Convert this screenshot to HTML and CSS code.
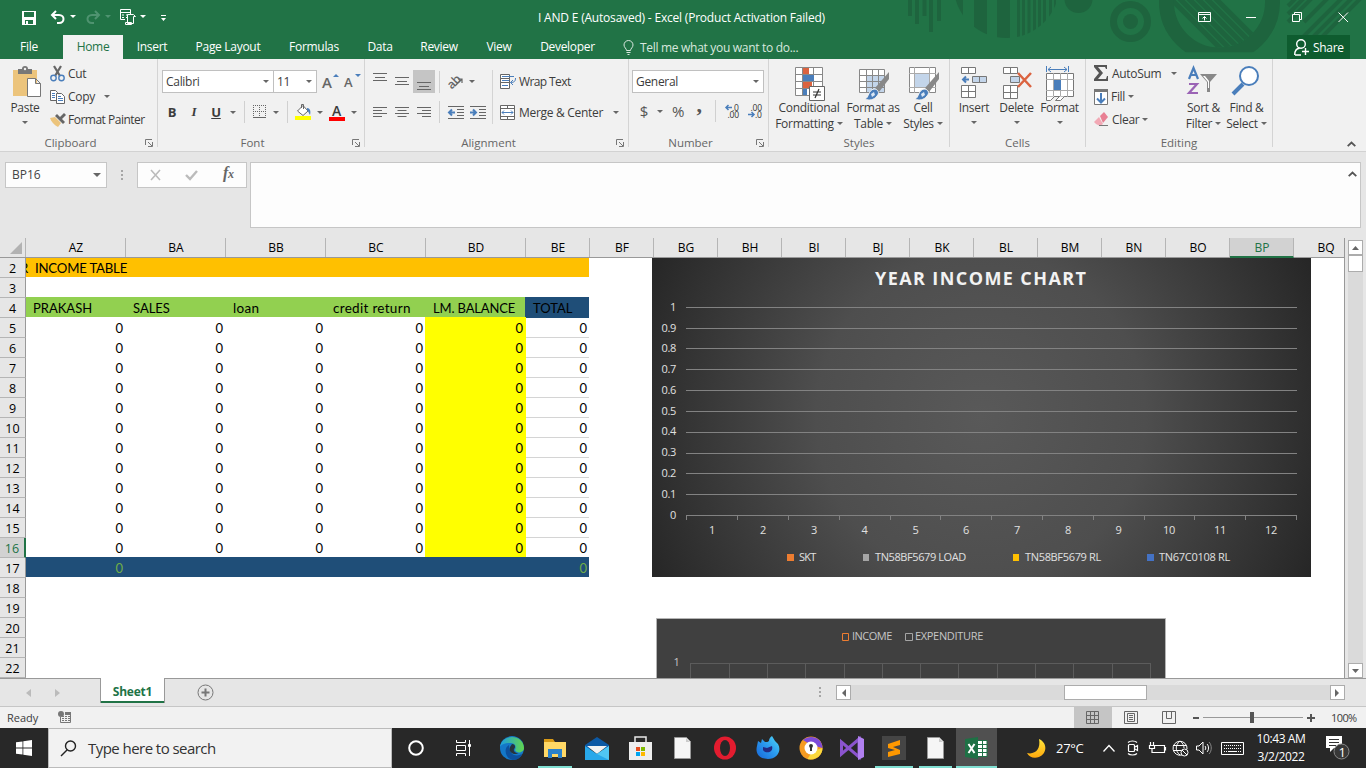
FILE: index.html
```html
<!DOCTYPE html>
<html lang="en">
<head>
<meta charset="utf-8">
<title>I AND E (Autosaved) - Excel</title>
<link rel="stylesheet" href="styles.css">
</head>
<body>
<header class="top">
  <svg class="decor" width="480" height="59" viewBox="0 0 480 59">
    <defs>
      <clipPath id="disc"><circle cx="120.500" cy="-14.800" r="52.800"/></clipPath>
      <clipPath id="lens"><circle cx="333.500" cy="2" r="45.600"/></clipPath>
      <clipPath id="cut"><rect width="480" height="52.300"/></clipPath>
    </defs>
    <g fill="#1e643e">
      <path d="M22 0h4v16h-4zM29 0h4v24h-4zM36.500 0h4v16h-4zM43 0h4v32h-4zM51 0h4v21h-4z"/>
      <path clip-path="url(#disc)" d="M60 0h17v40h-17zM88 0h13v40h-13zM111 0h13v40h-13zM131 0h3v40h-3zM136 0h3v40h-3zM141.500 0h3v40h-3zM147 0h3v40h-3zM152 0h3v40h-3zM157 0h3v40h-3zM163 0h3v40h-3zM168 0h2v40h-2z"/>
      <circle cx="192.500" cy="-1" r="14"/>
      <circle cx="244.500" cy="21.500" r="7.500"/>
    </g>
    <circle cx="244.500" cy="21.500" r="17" fill="none" stroke="#1e643e" stroke-width="7"/>
    <g clip-path="url(#cut)" fill="none" stroke="#1e643e">
      <circle cx="333.500" cy="2" r="53" stroke-width="15"/>
      <path clip-path="url(#lens)" stroke-width="5" d="M280-6l62 62M289-6l62 62M298-6l62 62M307-6l62 62M316-6l62 62M325-6l62 62"/>
      <path stroke-width="4" d="M402 6l9-9M402 14l19-19M402 22l28-28M418 22l26-26M402 52l57-57M412 52l57-57M421 52l54-54"/>
    </g>
  </svg>
  <div class="titlebar">
    <div class="quick">
      <svg width="14" height="14"><path fill="#fff" fill-rule="evenodd" d="M0 0h14v14H0zM2 1v5h10V1zM3 9v4h1v-3h2v3h5V9z"/></svg>
      <svg width="15" height="14" fill="none" stroke="#fff" stroke-width="2"><path d="M6 0L2 4l4 4M2 4h7c6 0 6 8 0 8H7"/></svg>
      <i class="caret white"></i>
      <svg width="15" height="14" fill="none" stroke="#4f9370" stroke-width="2"><path d="M9 0l4 4-4 4M13 4H6c-6 0-6 8 0 8h2"/></svg>
      <i class="caret dim"></i>
      <svg width="17" height="17" fill="none" stroke="#fff"><path d="M5 10.500H.5V.5h10V5M.5 3.500h10M2 6h2m2 0h3M2 8.500h2m2 0h2"/><path d="M7.500 5.500h6l2 2h-2v7h-6z M5.500 13.500h6v2h-6z" fill="#217346"/></svg>
      <i class="caret white"></i>
      <svg width="9" height="9" fill="#fff"><path d="M2 0h5v1H2zM2 3h5L4.500 6z"/></svg>
    </div>
    <div class="doc-title">I AND E (Autosaved) - Excel (Product Activation Failed)</div>
    <div class="winctl">
      <svg width="13" height="11" fill="none" stroke="#fff"><path d="M.5.500h12v9H.5zM.5 2.500h12M6.500 8.500V4.500M4.500 6.500l2-2 2 2"/></svg>
      <svg width="11" height="11" stroke="#fff"><path d="M0 5.500h10"/></svg>
      <svg width="11" height="11" fill="none" stroke="#fff"><path d="M.5 2.500h7v7h-7zM2.500 2V.5h7v7H8"/></svg>
      <svg width="11" height="11" fill="none" stroke="#fff"><path d="M.5.500l9.500 9.500M10 .5L.5 10"/></svg>
    </div>
  </div>
  <nav class="tabs">
    <span class="file">File</span><span class="active">Home</span><span>Insert</span><span>Page Layout</span><span>Formulas</span><span>Data</span><span>Review</span><span>View</span><span>Developer</span>
    <span class="tell"><svg width="11" height="15" fill="none" stroke="#d9e8df"><path d="M3.500 10.500c0-2-2.500-3-2.500-5.500a4.500 4.500 0 0 1 9 0c0 2.500-2.500 3.500-2.500 5.500zM3.500 12.500h4M4.500 14.500h2"/></svg>Tell me what you want to do...</span>
    <span class="share"><svg width="15" height="17" fill="none" stroke="#fff" stroke-width="1.400"><circle cx="7" cy="5" r="4.300"/><path d="M.700 16c0-4 2-6.500 5-6.700M7 16H1M11.500 9v7M8 12.500h7"/></svg>Share</span>
  </nav>
</header>

<section class="ribbon">
  <div class="group clipboard">
    <div class="body">
      <div class="big paste">
        <svg width="30" height="32" viewBox="0 0 30 32"><path fill="#ecc47c" d="M1 4h24v26H1z"/><path fill="#777" d="M6 3h4a3 3 0 0 1 6 0h4v5H6z"/><circle cx="13" cy="3" r="1.200" fill="#f1f1f1"/><path fill="#fff" stroke="#777" d="M15.500 12.500h8l5 5v13h-13zM23.500 12.500v5h5"/></svg>
        <span>Paste</span><i class="caret"></i>
      </div>
      <div class="list">
        <div><svg width="15" height="16" fill="none"><path stroke="#666" stroke-width="2.200" d="M4 0l6 10M11 0L5 10"/><circle cx="3.500" cy="12" r="2.700" stroke="#4a7ebb" stroke-width="1.400"/><circle cx="11.500" cy="12" r="2.700" stroke="#4a7ebb" stroke-width="1.400"/></svg>Cut</div>
        <div><svg width="15" height="14"><path fill="#fff" stroke="#666" d="M.5.500h5l2 2v8h-7z"/><path stroke="#4a7ebb" d="M2 3.500h3M2 5.500h3M2 7.500h3"/><path fill="#fff" stroke="#666" d="M6.500 3.500h5l3 3v7h-8z"/><path stroke="#4a7ebb" d="M8 6.500h3M8 8.500h5M8 10.500h5"/></svg>Copy<i class="caret gap"></i></div>
        <div class="tight"><svg width="16" height="14"><path fill="#ecc47c" d="M0 5l5-1 6 6-3 4C4 12 1 8 0 5z"/><path fill="#666" d="M5 3l2-2 8 8-2 2-4-4zM10 4l4-4 2 2-4 4z"/></svg>Format Painter</div>
      </div>
    </div>
    <footer>Clipboard</footer><svg class="launch" width="8" height="8"><use href="#launch"/></svg>
  </div>

  <div class="group font">
    <div class="body">
      <div class="row1">
        <div class="combo">Calibri<i class="caret"></i></div><div class="combo">11<i class="caret"></i></div>
        <span class="grow">A<svg width="6" height="3"><path fill="#4a7ebb" d="M0 3h6L3 0z"/></svg></span><span class="grow shrink">A<svg width="6" height="3"><path fill="#4a7ebb" d="M0 0h6L3 3z"/></svg></span>
      </div>
      <div class="row2">
        <b>B</b><b class="it">I</b><b class="un">U</b><i class="caret"></i><i class="sep"></i>
        <svg width="14" height="14" fill="none" stroke="#666"><path stroke-dasharray="1 1" d="M0 .5h13M0 6.500h13M.5 0v12M6.500 0v12M12.500 0v12"/><path d="M0 12.500h13"/></svg><i class="caret"></i><i class="sep"></i>
        <svg width="17" height="17"><path fill="#fff" stroke="#666" d="M2.500 7L8 1.500 13 7l-5 4.500zM6.500 4V.5h2V5"/><path fill="#4a7ebb" d="M12 4c3 0 4 3 3 7-1-1-1-3-3-5z"/><path fill="#ff0" d="M0 12h16v4H0z"/></svg><i class="caret"></i>
        <span class="fontcol">A</span><i class="caret"></i>
      </div>
    </div>
    <footer>Font</footer><svg class="launch" width="8" height="8"><use href="#launch"/></svg>
  </div>

  <div class="group align">
    <div class="body">
      <div class="alignl">
        <svg width="14" height="9"><path stroke="#666" d="M0 .5h14M2 4.500h10M0 7.500h14"/></svg>
        <svg width="14" height="9"><path stroke="#666" d="M0 .5h14M2 4.500h10M0 7.500h14"/></svg>
        <span class="on"><svg width="14" height="9"><path stroke="#666" d="M0 .5h14M2 4.500h10M0 7.500h14"/></svg></span>
        <i class="sep"></i>
        <span class="orient"><span>ab</span><svg width="10" height="10" fill="none" stroke="#666" stroke-width="1.200"><path d="M1 9l7-7M4 2h4v4"/></svg></span><i class="caret"></i>
        <svg width="14" height="11"><path stroke="#666" d="M0 .5h14M0 3.500h9M0 6.500h14M0 9.500h9"/></svg>
        <svg width="14" height="11"><path stroke="#666" d="M0 .5h14M2.500 3.500h9M0 6.500h14M2.500 9.500h9"/></svg>
        <svg width="14" height="11"><path stroke="#666" d="M0 .5h14M5 3.500h9M0 6.500h14M5 9.500h9"/></svg>
        <i class="sep"></i>
        <svg width="16" height="13"><path stroke="#666" d="M0 .5h16M9 3.500h7M9 6.500h7M9 9.500h7M0 12.500h16"/><path stroke="#4a7ebb" stroke-width="2" fill="none" d="M7 6.500H1M4 3.500l-3 3 3 3"/></svg>
        <svg width="16" height="13"><path stroke="#666" d="M0 .5h16M9 3.500h7M9 6.500h7M9 9.500h7M0 12.500h16"/><path stroke="#4a7ebb" stroke-width="2" fill="none" d="M0 6.500h6M3 3.500l3 3-3 3"/></svg>
      </div>
      <div class="alignr">
        <div class="tight"><svg width="16" height="16" fill="none" stroke="#666"><path fill="#fff" d="M.5.500h9v4h-9zM.5 4.500h9v4h-9zM.5 8.500h9v6h-9z"/><path stroke="#4a7ebb" d="M2 2.500h12M2 11.500h6M2 6.500h7M15.500 4c0 3-1 4.500-5 4.500M13 6l-2.500 2.500L13 11"/></svg>Wrap Text</div>
        <div><svg width="15" height="15" fill="none" stroke="#666"><path fill="#fff" d="M.5.500h14v14H.5z"/><path d="M0 3.500h15M0 11.500h15M7.500 0v3.500M7.500 11.500V15"/><path stroke="#4a7ebb" d="M2 7.500h11M4 5.500l-2 2 2 2M11 5.500l2 2-2 2"/></svg>Merge &amp; Center<i class="caret"></i></div>
      </div>
    </div>
    <footer>Alignment</footer><svg class="launch" width="8" height="8"><use href="#launch"/></svg>
  </div>

  <div class="group number">
    <div class="body">
      <div class="combo">General<i class="caret"></i></div>
      <div class="row2">
        <span class="sym">$</span><i class="caret"></i><span class="sym">%</span><span class="comma">,</span><i class="sep"></i>
        <svg class="dec" width="16" height="14"><path fill="none" stroke="#4a7ebb" stroke-width="1.500" d="M7 3.500H1M3.500 1L1 3.500 3.500 6"/><text x="7" y="7">.0</text><text x="2.500" y="14">.00</text></svg>
        <svg class="dec" width="16" height="14"><path fill="none" stroke="#4a7ebb" stroke-width="1.500" d="M0 10.500h6M3.500 8L6 10.500 3.500 13"/><text x="2.500" y="7">.00</text><text x="7" y="14">.0</text></svg>
      </div>
    </div>
    <footer>Number</footer><svg class="launch" width="8" height="8"><use href="#launch"/></svg>
  </div>

  <div class="group styles">
    <div class="body">
      <div class="big"><svg width="30" height="36" viewBox="0 0 30 36"><path fill="#fff" stroke="#888" d="M.5 1.500h27v28H.5z"/><path stroke="#888" d="M0 8.500h28M0 15.500h28M0 22.500h28M7.500 1v28M18.500 1v28"/><path fill="#db6340" d="M8 2h6v6H8zM8 16h9v6H8z"/><path fill="#4a7ebb" d="M8 9h11v6H8zM8 23h4v6H8z"/><path fill="#fff" stroke="#666" d="M14.500 20.500h15v14h-15z"/><path stroke="#333" stroke-width="1.200" d="M18 26h8M18 29h8M24 23l-4 9"/></svg><span>Conditional<br>Formatting<i class="caret"></i></span></div>
      <div class="big"><svg width="30" height="36" viewBox="0 0 30 36"><path fill="#fff" d="M1 4h24v22H1z"/><path fill="#c3d5ea" d="M7 9h19v17H7z"/><path fill="none" stroke="#888" d="M.5 3.500h25v23H.5zM.5 9.500h25M.5 15.500h25M.5 21.500h25M7.500 3.500v23M13.500 3.500v23M19.500 3.500v23"/><use href="#brush"/></svg><span>Format as<br>Table<i class="caret"></i></span></div>
      <div class="big"><svg width="30" height="36" viewBox="0 0 30 36"><path fill="#fff" stroke="#888" d="M.5 1.500h26v25H.5z"/><path stroke="#aaa" d="M0 7.500h27M0 21.500h27M5.500 1v26M20.500 1v26"/><path fill="#c3d5ea" d="M6 8h14v13H6z"/><use href="#brush"/></svg><span>Cell<br>Styles<i class="caret"></i></span></div>
    </div>
    <footer>Styles</footer>
  </div>

  <div class="group cells">
    <div class="body">
      <div class="big"><svg width="28" height="36" viewBox="0 0 28 36" stroke="#777"><path fill="#fff" d="M1.500 1.500h14v6h-14zM8.500 1.500v6M1.500 19.500h14v12h-14zM1.500 25.500h14M8.500 19.500v12"/><path fill="#c3d5ea" d="M12.500 10.500h14v6h-14zM19.500 10.500v6"/><path fill="none" stroke="#4a7ebb" stroke-width="2" d="M9 13.500H3M6 10.500l-3 3 3 3"/></svg><span>Insert</span><i class="caret"></i></div>
      <div class="big"><svg width="30" height="36" viewBox="0 0 30 36" stroke="#777"><path fill="#fff" d="M1.500 1.500h14v6h-14zM8.500 1.500v6M1.500 19.500h14v13h-14zM1.500 26.500h14M8.500 19.500v13"/><path fill="#c3d5ea" d="M8.500 10.500h9v6h-9z"/><path fill="none" stroke="#db6340" stroke-width="2.500" d="M16 7l13 14M29 7L16 21"/></svg><span>Delete</span><i class="caret"></i></div>
      <div class="big"><svg width="28" height="36" viewBox="0 0 28 36"><path fill="#fff" stroke="#777" d="M.5 7.500h27v23H.5z"/><path stroke="#aaa" d="M0 13.500h28M0 24.500h28M7.500 7v24M14.500 7v24M21.500 7v24"/><path fill="#4a7ebb" d="M8 14h7v10H8z"/><path fill="none" stroke="#4a7ebb" d="M.5 0v6M22.500 0v6M2 3.500h19M5 1L2 3.500 5 6M18 1l3 2.500L18 6"/><path fill="#fff" stroke="#777" d="M.5 30.500v4h4l4-4h5l-4 4h5l4-4"/></svg><span>Format</span><i class="caret"></i></div>
    </div>
    <footer>Cells</footer>
  </div>

  <div class="group editing">
    <div class="body">
      <div class="list">
        <div><svg width="15" height="17"><path fill="#555" d="M0 0h13v4h-1l-1-2H4l5 6-5 6h8l1-3h1v5H0v-2l5-6-5-6z"/></svg>AutoSum<i class="caret gap"></i></div>
        <div><svg width="14" height="18"><path fill="#fff" stroke="#777" d="M.5 1.500h13v15H.5z"/><path fill="#777" d="M0 1h14v3H0z"/><path fill="none" stroke="#4a7ebb" stroke-width="2" d="M7 5v9M3 10.500l4 4 4-4"/></svg>Fill<i class="caret"></i></div>
        <div><svg width="15" height="15"><path fill="#e87f93" d="M6 4l4-4 4 5-5 6z"/><path fill="#f2a9b5" d="M5 5l4 7-3 2-4-2-2-2z"/><path stroke="#777" d="M5 13.500h9"/></svg>Clear<i class="caret"></i></div>
      </div>
      <div class="big"><svg width="30" height="32" viewBox="0 0 30 32"><path fill="none" stroke="#4a7ebb" stroke-width="2.200" d="M1 13L5.500 2 10 13M2.500 9h6"/><path fill="none" stroke="#9b64b5" stroke-width="2.200" d="M1 18h8L1 27h9"/><path fill="#888" d="M12 8h17l-7 8v10h-3V16z"/><path fill="#fff" d="M15 10h2l4 5v7h-1v-6z"/></svg><span>Sort &amp;<br>Filter<i class="caret"></i></span></div>
      <div class="big"><svg width="30" height="32" viewBox="0 0 30 32"><path stroke="#4a7ebb" stroke-width="4" d="M2 28l10-10"/><circle cx="18" cy="10" r="9" fill="#fff" stroke="#4a7ebb" stroke-width="2"/></svg><span>Find &amp;<br>Select<i class="caret"></i></span></div>
    </div>
    <footer>Editing</footer>
  </div>
  <svg class="collapse" width="9" height="6" fill="none" stroke="#555" stroke-width="1.800"><path d="M.7 5.200l3.800-3.700 3.800 3.700"/></svg>
</section>

<section class="formula">
  <div class="namebox">BP16<i class="caret"></i></div>
  <svg width="3" height="12" fill="#a6a6a6"><path d="M0 0h2v2H0zM0 4h2v2H0zM0 8h2v2H0z"/></svg>
  <div class="fxbox">
    <svg width="11" height="10" stroke="#bbb" stroke-width="1.600"><path d="M1 0l9 10M10 0L1 10"/></svg>
    <svg width="13" height="11" fill="none" stroke="#bbb" stroke-width="2.400"><path d="M0 5l4 4 7-8"/></svg>
    <span>f<small>x</small></span>
  </div>
  <div class="input"><svg width="9" height="6" fill="none" stroke="#555" stroke-width="1.800"><path d="M.7 5.200l3.800-3.700 3.800 3.700"/></svg></div>
</section>

<main>
  <div class="sheet">
    <div class="cols"><span class="corner"><svg width="12" height="12"><path fill="#b2b2b2" d="M12 0v12H0z"/></svg></span><span>AZ</span><span>BA</span><span>BB</span><span>BC</span><span>BD</span><span>BE</span><span>BF</span><span>BG</span><span>BH</span><span>BI</span><span>BJ</span><span>BK</span><span>BL</span><span>BM</span><span>BN</span><span>BO</span><span class="sel">BP</span><span>BQ</span></div>
    <div class="r heading"><b>2</b><span class="title"><em>R</em>INCOME TABLE</span></div>
    <div class="r"><b>3</b></div>
    <div class="r names"><b>4</b><span>PRAKASH</span><span>SALES</span><span class="lower">loan</span><span class="lower">credit return</span><span>LM. BALANCE</span><span class="navy">TOTAL</span></div>
    <div class="r d"><b>5</b><span>0</span><span>0</span><span>0</span><span>0</span><span>0</span><span>0</span></div>
    <div class="r d"><b>6</b><span>0</span><span>0</span><span>0</span><span>0</span><span>0</span><span>0</span></div>
    <div class="r d"><b>7</b><span>0</span><span>0</span><span>0</span><span>0</span><span>0</span><span>0</span></div>
    <div class="r d"><b>8</b><span>0</span><span>0</span><span>0</span><span>0</span><span>0</span><span>0</span></div>
    <div class="r d"><b>9</b><span>0</span><span>0</span><span>0</span><span>0</span><span>0</span><span>0</span></div>
    <div class="r d"><b>10</b><span>0</span><span>0</span><span>0</span><span>0</span><span>0</span><span>0</span></div>
    <div class="r d"><b>11</b><span>0</span><span>0</span><span>0</span><span>0</span><span>0</span><span>0</span></div>
    <div class="r d"><b>12</b><span>0</span><span>0</span><span>0</span><span>0</span><span>0</span><span>0</span></div>
    <div class="r d"><b>13</b><span>0</span><span>0</span><span>0</span><span>0</span><span>0</span><span>0</span></div>
    <div class="r d"><b>14</b><span>0</span><span>0</span><span>0</span><span>0</span><span>0</span><span>0</span></div>
    <div class="r d"><b>15</b><span>0</span><span>0</span><span>0</span><span>0</span><span>0</span><span>0</span></div>
    <div class="r d last"><b class="sel">16</b><span>0</span><span>0</span><span>0</span><span>0</span><span>0</span><span>0</span></div>
    <div class="r total"><b>17</b><span>0</span><span></span><span></span><span></span><span></span><span>0</span></div>
    <div class="r"><b>18</b></div><div class="r"><b>19</b></div><div class="r"><b>20</b></div><div class="r"><b>21</b></div><div class="r"><b>22</b></div>

    <svg class="chart income" width="659" height="319" viewBox="652 258 659 319">
      <defs><radialGradient id="glow" gradientUnits="userSpaceOnUse" cx="981" cy="417" r="366"><stop offset="0" stop-color="#595959"/><stop offset=".45" stop-color="#4e4e4e"/><stop offset="1" stop-color="#262626"/></radialGradient></defs>
      <path fill="url(#glow)" d="M652 258h659v319H652z"/>
      <text class="ctitle" x="875" y="285" textLength="212">YEAR INCOME CHART</text>
      <path fill="none" stroke="#828282" d="M686 307.500h611M686 328.500h611M686 348.500h611M686 369.500h611M686 390.500h611M686 411.500h611M686 432.500h611M686 453.500h611M686 473.500h611M686 494.500h611M686 515.500h611M686.500 515v5M737.500 515v5M788.500 515v5M839.500 515v5M890.500 515v5M940.500 515v5M991.500 515v5M1042.500 515v5M1093.500 515v5M1144.500 515v5M1194.500 515v5M1245.500 515v5M1296.500 515v5"/>
      <g text-anchor="end"><text x="676" y="311">1</text><text x="676" y="332">0.9</text><text x="676" y="352">0.8</text><text x="676" y="373">0.7</text><text x="676" y="394">0.6</text><text x="676" y="415">0.5</text><text x="676" y="435">0.4</text><text x="676" y="456">0.3</text><text x="676" y="477">0.2</text><text x="676" y="498">0.1</text><text x="676" y="519">0</text></g>
      <g text-anchor="middle"><text x="712" y="534">1</text><text x="763" y="534">2</text><text x="814" y="534">3</text><text x="864.500" y="534">4</text><text x="915.500" y="534">5</text><text x="966" y="534">6</text><text x="1017" y="534">7</text><text x="1068" y="534">8</text><text x="1118.500" y="534">9</text><text x="1169" y="534">10</text><text x="1220" y="534">11</text><text x="1271" y="534">12</text></g>
      <path fill="#ed7d31" d="M787 554h7v7h-7z"/><path fill="#a5a5a5" d="M863 554h6v7h-6z"/><path fill="#ffc000" d="M1013 554h6v7h-6z"/><path fill="#4472c4" d="M1147 554h7v7h-7z"/>
      <text x="799" y="561" textLength="17">SKT</text><text x="875" y="561" textLength="91">TN58BF5679 LOAD</text><text x="1025" y="561" textLength="76">TN58BF5679 RL</text><text x="1159" y="561" textLength="71">TN67C0108 RL</text>
    </svg>
    <svg class="chart expense" width="510" height="60" viewBox="656 618 510 60">
      <path fill="#404040" stroke="#b4b4b4" d="M656.500 618.500h509v80h-509z"/>
      <path fill="none" stroke="#ed7d31" d="M842.500 633.500h6v7h-6z"/><path fill="none" stroke="#a5a5a5" d="M905.500 633.500h7v7h-7z"/>
      <g class="muted"><text x="852" y="640" textLength="40">INCOME</text><text x="915" y="640" textLength="68">EXPENDITURE</text><text x="673.500" y="666">1</text></g>
      <path fill="none" stroke="#5c5c5c" d="M690 663.500h461M690.500 663v16M729.500 663v16M767.500 663v16M805.500 663v16M844.500 663v16M882.500 663v16M920.500 663v16M958.500 663v16M997.500 663v16M1035.500 663v16M1073.500 663v16M1112.500 663v16M1150.500 663v16"/>
    </svg>
  </div>
  <div class="vscroll"><span class="btn"><svg width="7" height="4"><path fill="#666" d="M0 4h7L3.500 0z"/></svg></span><span class="thumb"></span><span class="btn down"><svg width="7" height="4"><path fill="#666" d="M0 0h7L3.500 4z"/></svg></span></div>
</main>

<div class="sheetbar">
  <svg width="5" height="8"><path fill="#bbb" d="M5 0v8L0 4z"/></svg><svg width="5" height="8"><path fill="#bbb" d="M0 0v8l5-4z"/></svg>
  <span class="tab">Sheet1</span>
  <svg class="add" width="17" height="17" fill="none" stroke="#777"><circle cx="8.500" cy="8.500" r="7.500"/><path stroke-width="2" d="M4.500 8.500h8M8.500 4.500v8"/></svg>
  <svg class="dots" width="2" height="11" fill="#a6a6a6"><path d="M0 0h2v2H0zM0 4h2v2H0zM0 8h2v2H0z"/></svg>
  <div class="hscroll"><span class="btn"><svg width="5" height="8"><path fill="#666" d="M5 0v8L1 4z"/></svg></span><span class="thumb"></span><span class="btn"><svg width="5" height="8"><path fill="#666" d="M0 0v8l4-4z"/></svg></span></div>
</div>

<div class="status">
  <span>Ready</span>
  <svg class="macro" width="14" height="13"><path fill="none" stroke="#777" d="M2.500 6v5.500h10V2.500H7"/><path fill="#777" d="M7 1h6v3H7z"/><circle cx="3" cy="3" r="3" fill="#777"/><path stroke="#777" stroke-dasharray="2 1" d="M4 5.500h8M4 7.500h8M4 9.500h8"/></svg>
  <div class="views">
    <span class="on"><svg width="13" height="13" fill="none" stroke="#666"><path d="M.5.500h12v12H.5zM.5 4.500h12M.5 8.500h12M4.500.500v12M8.500.500v12"/></svg></span>
    <span><svg width="14" height="13" fill="none" stroke="#666"><path d="M.5.500h13v12H.5zM3.500 2.500h7v8h-7zM5 4.500h4M5 6.500h4M5 8.500h4"/></svg></span>
    <span><svg width="14" height="13" fill="none" stroke="#666"><path d="M.5.500h13v12H.5zM4.500.500v7h5v-7"/></svg></span>
  </div>
  <svg width="122" height="13"><path fill="#555" d="M0 6h6v2H0zM57 1h4v11h-4z"/><path stroke="#999" d="M10 6.500h47M61 6.500h49"/><path stroke="#555" stroke-width="2" d="M114 7h8M118 3v8"/></svg>
  <span class="zoomtxt">100%</span>
</div>

<footer class="taskbar">
  <div class="start"><svg width="16" height="16" fill="#fff"><path d="M0 2.300L6.500 1.400v6.200H0zM7.300 1.300L16 0v7.600H7.300zM0 8.400h6.500v6.200L0 13.700zM7.300 8.400H16V16l-8.700-1.300z"/></svg></div>
  <div class="search"><svg width="17" height="17" fill="none" stroke="#222" stroke-width="1.400"><circle cx="10.500" cy="6" r="5"/><path d="M7 10L1 16"/></svg>Type here to search</div>
  <div class="apps">
    <span><svg width="16" height="16"><circle cx="8" cy="8" r="6.800" fill="none" stroke="#fff" stroke-width="2"/></svg></span>
    <span><svg width="17" height="16" fill="none" stroke="#fff"><path d="M1.500 0v2.500h9V0M1.500 5.500h9v5h-9zM1.500 16v-2.500h9V16M14.500 0v16"/><path fill="#fff" d="M13.500 4.500h2v2h-2z"/></svg></span>
    <span><svg width="26" height="26"><defs><linearGradient id="eg"><stop stop-color="#1b9de2"/><stop offset="1" stop-color="#63d64c"/></linearGradient></defs><circle cx="13" cy="13" r="12" fill="#1478c8"/><path fill="url(#eg)" d="M1 12C2-1 24-2 25 13c0 5-8 6-9 2 2-5-1-7-5-7C5 8 2 10 1 12z"/><path fill="#0c509d" d="M10 10c-7 4-2 15 4 15 5 0 8-3 9-6-5 3-13 2-13-9z"/><path fill="#26343d" d="M13 9c3 0 4 3 2 5-1 2 2 5 5 4-5 3-11-1-9-6z"/></svg></span>
    <span class="run"><svg width="22" height="20"><path fill="#d99a16" d="M0 1h9l2 3h10v5H0z"/><path fill="#ffd866" d="M0 4h22v15H0z"/><path fill="#2b82cb" d="M4 20v-9h14v9h-4v-4H8v4z"/></svg></span>
    <span><svg width="24" height="23"><path fill="#0c59a4" d="M0 8l12-8 12 8v4H0z"/><path fill="#f2f2f2" d="M2 9h20l-10 8z"/><path fill="#28a8ea" d="M0 9l12 8 12-8v14H0z"/><path fill="#50c7f4" d="M12 17l12-8v14z"/></svg></span>
    <span><svg width="23" height="24"><path fill="none" stroke="#e8e8e8" stroke-width="1.500" d="M6 7V1h11v6"/><path fill="#eee" d="M0 6h23v18H0z"/><path fill="#e64c1f" d="M7 11h4v4H7z"/><path fill="#7fba00" d="M12 11h4v4h-4z"/><path fill="#00a4ef" d="M7 16h4v4H7z"/><path fill="#ffb900" d="M12 16h4v4h-4z"/></svg></span>
    <span><svg width="17" height="22"><path fill="#f6f6f6" stroke="#999" d="M.5.500h12l4 4v17H.5z"/><path fill="#ccc" d="M12 1v4h4z"/></svg></span>
    <span><svg width="24" height="24"><ellipse cx="12" cy="12" rx="11" ry="11.500" fill="#e31c2f"/><ellipse cx="12" cy="12" rx="5" ry="8" fill="#282828"/></svg></span>
    <span><svg width="24" height="24"><defs><linearGradient id="fx" x1="1" x2="0" y2="1"><stop stop-color="#4fd8f8"/><stop offset=".5" stop-color="#2a98ee"/><stop offset="1" stop-color="#1766d8"/></linearGradient></defs><path fill="url(#fx)" d="M1 10l1-5 3 2 1-4 3 3c2 0 3 0 4-1 0-2 1-4 3-5l3 5 3 3c4 7-1 15-10 15S-1 17 1 10z"/><path fill="#232a83" d="M7 11l4 1 5-2c2 7-7 8-9 4z"/></svg></span>
    <span><svg width="24" height="24"><circle cx="12" cy="12" r="11.500" fill="#f59b21"/><path fill="#7d4bd8" d="M4 4c7-6 19-3 19.500 8L12 9z"/><path fill="#fbd83c" d="M23.500 12c0 8-8 13-15 11l5-8z"/><circle cx="12" cy="12" r="6.500" fill="#fff"/><path fill="#333" d="M10 10a2 2 0 0 1 4 0l-1 2v3h-2v-3z"/></svg></span>
    <span><svg width="24" height="24"><path fill="none" stroke="#8b54ce" stroke-width="3" d="M1.500 6v12L19 3v18z"/><path fill="#b180f0" d="M18 0l6 3v18l-6 3z"/></svg></span>
    <span class="run"><svg width="24" height="24"><path fill="#454545" d="M0 0h24v24H0z"/><path fill="#ff9800" d="M6 8l12-4v5l-7 2 7 3v4L6 21v-5l7-2-7-2z"/></svg></span>
    <span class="run"><svg width="17" height="22"><path fill="#f6f6f6" stroke="#999" d="M.5.500h12l4 4v17H.5z"/><path fill="#ccc" d="M12 1v4h4z"/></svg></span>
    <span class="run cur"><svg width="23" height="22"><path fill="#fff" stroke="#1e7145" d="M12 3.500h10v16H12zM12 7.500h10M12 11.500h10M12 15.500h10M17.500 3v16"/><path fill="#1e7145" d="M0 2l13-2v22L0 20z"/><path stroke="#fff" stroke-width="2" d="M3.500 7l6 9M9.500 7l-6 9"/></svg></span>
  </div>
  <div class="tray">
    <svg width="19" height="19"><defs><linearGradient id="mn" x2="0" y2="1"><stop stop-color="#ffe63b"/><stop offset="1" stop-color="#fda80d"/></linearGradient></defs><path fill="url(#mn)" d="M12 0c9 4 8 15 0 18-5 2-10 0-12-4 8 2 14-4 12-14z"/></svg>
    <span class="temp">27°C</span>
    <svg width="12" height="8" fill="none" stroke="#fff" stroke-width="1.300"><path d="M.5 7.500l5.500-6 5.500 6"/></svg>
    <svg width="12" height="16" fill="none" stroke="#fff" stroke-width="1.200"><rect x="1.500" y="4.500" width="6" height="7" rx="1"/><path d="M8 7l2.500-1.500v5L8 9M1 2.500C3 .5 8 .5 10 2.500M1 13.500c2 2 7 2 9 0"/></svg>
    <svg width="17" height="12" fill="none" stroke="#fff" stroke-width="1.200"><path d="M6 3.500h9.500v7H5.500M15.500 5.500h1v3M1.500 0v3M4.500 0v3M.5 3.500h5v3h-5zM3 6.500v4h3"/></svg>
    <svg width="17" height="17" fill="none" stroke="#fff"><path d="M10 15a7 7 0 1 1 5-6M1 5.500h13M1 10.500h8M8 1C3 5 3 11 8 15M8 1c3 2 4 5 4 7"/><circle cx="12.500" cy="12.500" r="3.500"/><path d="M10 10l5 5"/></svg>
    <svg width="16" height="14" fill="none" stroke="#fff"><path d="M.5 5v4H3l4 4V1L3 5zM9 5c1 1 1 3 0 4M11 3c2 2 2 6 0 8"/><path stroke="#888" d="M13 1c3 3 3 9 0 12"/></svg>
    <svg width="23" height="13" fill="none" stroke="#fff"><path d="M.5.500h22v12H.5z"/><path stroke-dasharray="1 1" d="M3 3.500h17M3 6.500h17"/><path stroke-dasharray="1 1" d="M3 9.500h3M17 9.500h3"/><path d="M7 9.500h9"/></svg>
    <span class="clock">10:43 AM<br>3/2/2022</span>
    <svg width="24" height="24"><path fill="#fff" d="M0 0h16v12H8l-4 4v-4H0z"/><path stroke="#333" d="M3 3.500h10M3 6.500h10M3 9.500h7"/><circle cx="15.500" cy="15.500" r="7.500" fill="#383838" stroke="#888"/><text x="12.500" y="20.500" font-size="13">1</text></svg>
  </div>
</footer>

<svg width="0" height="0" class="defs"><defs>
  <g id="launch" fill="none" stroke="#777"><path d="M.5 6V.5H7M3 3l4 4M7.500 3v4.500H3"/></g>
  <g id="brush"><path fill="#888" d="M30 6v7l-10 13-4-4z"/><path fill="#4a7ebb" stroke="#f1f1f1" d="M6 33c4-1 3-9 9-10 4 0 6 4 3 7-3 4-8 5-12 3z"/><path fill="#dbe7f4" d="M12 28l3-2 1 3-3 2z"/></g>
</defs></svg>
</body>
</html>
```
FILE: styles.css
```css
* { box-sizing: border-box; }
body { margin: 0; width: 1366px; height: 768px; overflow: hidden; font: 12px/16px "Open Sans", "Noto Sans", sans-serif; letter-spacing: -.3px; color: #3c3c3c; background: #e6e6e6; display: flex; flex-direction: column; }
svg { display: block; flex: none; overflow: visible; }
.defs { position: absolute; }
.caret { display: inline-block; flex: none; width: 0; height: 0; border: 3px solid transparent; border-top-color: #666; border-bottom: 0; }
.caret.white { border-top-color: #fff; }
.caret.dim { border-top-color: #4f9370; }
.sep { width: 1px; height: 22px; background: #d0d0d0; }

.top { height: 59px; flex: none; background: #217346; color: #fff; position: relative; }
.decor { position: absolute; left: 886px; top: 0; overflow: hidden; }
.titlebar, .tabs { position: relative; display: flex; }
.titlebar { height: 35px; align-items: center; }
.quick { width: 515px; height: 30px; padding-left: 22px; display: flex; align-items: center; }
.quick > :nth-child(2) { margin-left: 14px; }
.quick > :nth-child(3) { margin: -2px 0 0 5px; }
.quick > :nth-child(4) { margin-left: 10px; }
.quick > :nth-child(5) { margin: -2px 0 0 4px; }
.quick > :nth-child(6) { margin-left: 9px; }
.quick > :nth-child(7) { margin: -2px 0 0 3px; }
.quick > :nth-child(8) { margin: 3px 0 0 13px; }
.doc-title { width: 333px; text-align: center; letter-spacing: -.2px; }
.winctl { margin-left: 350px; height: 30px; display: flex; align-items: center; gap: 35px; }
.tabs { height: 24px; line-height: 23px; }
.tabs span { text-align: center; width: 60px; white-space: nowrap; }
.tabs .file { width: 58px; margin-right: 5px; }
.tabs .active { background: #f1f1f1; color: #217346; }
.tabs span:nth-child(3) { width: 58px; }
.tabs span:nth-child(4) { width: 94px; }
.tabs span:nth-child(5) { width: 78px; }
.tabs span:nth-child(6) { width: 54px; }
.tabs span:nth-child(7) { width: 64px; }
.tabs span:nth-child(8) { width: 56px; }
.tabs span:nth-child(9) { width: 81px; }
.tabs .tell { width: 190px; margin-left: 15px; display: flex; align-items: center; gap: 6px; color: #d9e8df; }
.tabs .share { width: 63px; margin-left: 474px; background: #0e5c2f; display: flex; align-items: center; gap: 4px; padding-left: 7px; }

.ribbon { height: 93px; flex: none; display: flex; background: #f1f1f1; border-bottom: 1px solid #d2d2d2; }
.group { position: relative; height: 92px; padding-top: 4px; display: flex; flex-direction: column; border-right: 1px solid #d4d4d4; border-image: linear-gradient(#d4d4d4 95%, transparent 95%) 1; }
.group .body { height: 72px; display: flex; line-height: 16px; }
.group > footer { text-align: center; color: #666; line-height: 16px; letter-spacing: 0; font-size: 11.500px; }
.launch { position: absolute; right: 4px; bottom: 4px; }
.clipboard { width: 158px; } .font { width: 207px; } .align { width: 264px; } .number { width: 140px; } .styles { width: 181px; } .cells { width: 136px; } .editing { width: 187px; }
.clipboard > footer { padding-right: 16px; } .font > footer { padding-right: 17px; } .align > footer { padding-right: 16px; } .number > footer { padding-right: 16px; }
.big { display: flex; flex-direction: column; align-items: center; text-align: center; white-space: nowrap; }
.big svg { margin: 3px 0 -2px; height: 36px; }
.big svg[height="32"] { height: 32px; margin-bottom: 2px; }
.big span .caret { margin: 0 0 3px 3px; }
.big > .caret { margin-top: 5px; }
.paste { width: 50px; }
.paste svg { margin-left: 4px !important; }
.list { margin-top: -1px; }
.list > div { height: 23px; display: flex; align-items: center; gap: 3px; white-space: nowrap; }
.list .gap { margin-left: 6px; }
.list .tight { letter-spacing: -.5px; gap: 2px; }
.combo { height: 23px; border: 1px solid #c0c0c0; background: #fff; padding: 0 4px 0 3px; display: flex; align-items: center; justify-content: space-between; }
.font .body { flex-direction: column; padding: 7px 0 0 4px; gap: 8px; }
.font .row1 { display: grid; grid-template-columns: 112px 43px 22px 22px; }
.font .combo + .combo { margin-left: -1px; }
.grow { position: relative; font-size: 15px; font-weight: 600; color: #666; line-height: 24px; padding-left: 5px; }
.grow svg { position: absolute; right: 0; top: 4px; }
.shrink { font-size: 13px; }
.font .row2, .number .row2 { display: grid; align-items: center; justify-items: center; height: 22px; }
.font .row2 { margin-left: -1px; margin-top: -1px; grid-template-columns: 22px 22px 22px 12px 10px 21px 12px 10px 22px 11px 23px 11px; }
.row2 b { font-size: 13px; }
.it { font-family: "Liberation Serif", serif; font-style: italic; }
.un { text-decoration: underline; }
.fontcol { width: 16px; height: 17px; line-height: 14px; font-size: 14px; font-weight: 600; text-align: center; border-bottom: 4px solid #f00; }
.alignl { width: 127px; margin-top: 7px; padding-left: 4px; display: grid; grid-template-columns: 22px 22px 22px 8px 22px 22px; grid-template-rows: 23px 38px; align-items: center; justify-items: center; }
.alignl > :nth-child(1) { margin-top: -8px; }
.on { background: #c5c5c5; }
.alignl .on { width: 22px; height: 23px; padding: 12px 4px 0; }
.alignl > :nth-child(6) { justify-self: start; margin-left: 4px; }
.alignl > :nth-child(n+11) { margin-left: 3px; }
.orient { display: flex; align-items: center; margin-left: 3px; }
.orient span { transform: rotate(-45deg); font-size: 12px; font-weight: 600; color: #666; margin-right: -6px; }
.alignr { border-left: 1px solid #d4d4d4; margin-top: 7px; height: 54px; padding-left: 7px; }
.alignr div { height: 23px; display: flex; align-items: center; gap: 3px; white-space: nowrap; }
.alignr .tight { letter-spacing: -.6px; }
.alignr div + div { margin-top: 8px; gap: 4px; }
.alignr .caret { margin-left: 6px; }
.number .body { flex-direction: column; padding: 7px 4px 0 3px; gap: 8px; }
.number .row2 { grid-template-columns: 24px 8px 28px 14px 18px 23px 25px; justify-items: center; margin-top: -1px; }
.sym { font-size: 15px; color: #555; }
.comma { font: bold 22px/10px "Liberation Serif", serif; margin-top: -12px; color: #555; }
.number .row2 > :nth-child(6), .number .row2 > :nth-child(7) { justify-self: start; margin-left: 1px; }
.dec text { font: 8.500px "Open Sans", sans-serif; letter-spacing: -.2px; fill: #333; }
.styles .body { display: grid; grid-template-columns: 80px 48px 52px; }
.styles .big svg { margin-left: 2px; }
.cells .body { display: grid; grid-template-columns: 48px 37px 49px; }
.editing .body { display: grid; grid-template-columns: 96px 43px 43px; }
.editing .list { padding-left: 8px; }
.editing .list .gap { margin-left: 7px; }
.editing .big svg { margin-left: -2px; }
.collapse { margin: 82px 0 0 74px; }

.formula { height: 86px; flex: none; padding: 10px 0 0 5px; display: flex; }
.namebox { width: 102px; height: 26px; border: 1px solid #c6c6c6; background: #fdfdfd; display: flex; align-items: center; justify-content: space-between; padding: 0 5px 0 6px; margin-right: 14px; letter-spacing: 0; color: #444; }
.namebox .caret { border-width: 4px; border-bottom: 0; }
.formula > svg { margin: 8px 13px 0 0; }
.fxbox { width: 110px; height: 26px; border: 1px solid #c6c6c6; background: #fdfdfd; display: flex; align-items: center; padding-left: 12px; gap: 25px; }
.fxbox span { font: italic bold 16px/18px "Liberation Serif", serif; margin: -3px 0 0 -1px; color: #666; }
.fxbox small { font-size: 12px; }
.input { width: 1111px; height: 66px; margin-left: 3px; border: 1px solid #c6c6c6; background: #fdfdfd; display: flex; justify-content: flex-end; padding: 8px 3px; }

main { height: 440px; flex: none; display: flex; }
.sheet { width: 1345px; position: relative; overflow: hidden; background: #fff; border-right: 1px solid #999; color: #000; }
.cols, .r { display: grid; grid-template-columns: 26px repeat(5, 100px) repeat(13, 64px); height: 20px; }
.cols { background: #e6e6e6; line-height: 20px; border-bottom: 1px solid #999; text-align: center; letter-spacing: 0; }
.cols span { border-right: 1px solid #b5b5b5; height: 19px; padding-left: 1px; }
.cols .corner { display: flex; padding: 4px 0 0 10px; }
.cols .sel { background: #d2d2d2; color: #217346; height: 20px; border-bottom: 2px solid #217346; }
.r b { background: #e6e6e6; font-size: 12.500px; font-weight: 400; letter-spacing: 0; text-align: center; border-right: 1px solid #999; border-bottom: 1px solid #b5b5b5; line-height: 21px; height: 20px; }
.r b.sel { background: #d2d2d2; color: #217346; border-right: 2px solid #217346; }
.r span { font: 13px/22px Lato, sans-serif; letter-spacing: 0; height: 20px; margin-top: -1px; }
.heading .title { grid-column: 2 / 8; background: #ffc000; height: 19px; margin: 0 1px 0 0; overflow: hidden; display: flex; line-height: 21px; letter-spacing: -.2px; font-size: 13.200px; }
.title em { width: 9px; font-style: normal; text-indent: -6px; }
.names span { background: #92d050; padding-left: 7px; white-space: nowrap; line-height: 23px; }
.names span:nth-child(6) { letter-spacing: -.15px; }
.names .lower { font-size: 13.500px; letter-spacing: .3px; }
.names .navy, .total span { background: #1f4e78; }
.names .navy { margin-left: -1px; margin-right: 1px; height: 21px; padding-left: 8px; }
.d span, .total span { text-align: right; padding-right: 3px; line-height: 23px; }
.d span:nth-child(6) { background: #ff0; margin-left: -1px; }
.d span:nth-child(7) { border-bottom: 1px solid #d4d4d4; margin: 0 1px 0 0; line-height: 21px; padding-right: 2px; }
.d.last span:nth-child(7) { border-bottom: 0; }
.total span { color: #70ad47; }
.total span:last-child { margin-right: 1px; padding-right: 2px; }
.chart { position: absolute; overflow: hidden; font: 11px "Open Sans", sans-serif; fill: #e0e0e0; letter-spacing: -.3px; }
.income { left: 652px; top: 20px; }
.expense { left: 656px; top: 380px; }
.ctitle { font: bold 18px "Open Sans", sans-serif; letter-spacing: 1px; fill: #f2f2f2; }
.muted { fill: #c6c6c6; }
.vscroll { width: 15px; margin: 2px 0 0 3px; background: #dadada; display: flex; flex-direction: column; }
.btn, .thumb { background: #fff; border: 1px solid #acacac; }
.btn { width: 15px; height: 15px; display: flex; align-items: center; justify-content: center; }
.vscroll .thumb { height: 17px; }
.down { margin-top: auto; }

.sheetbar { height: 28px; flex: none; border-top: 1px solid #999; display: flex; align-items: center; padding-left: 26px; }
.sheetbar > svg + svg { margin-left: 24px; }
.sheetbar .tab { width: 65px; height: 25px; margin: -3px 0 0 40px; position: relative; top: -1px; background: #fff; border: solid #999; border-width: 0 1px; box-shadow: inset 0 -2px #217346; color: #217346; font-weight: 700; text-align: center; line-height: 27px; letter-spacing: -.2px; }
.sheetbar .add { margin-left: 32px; }
.sheetbar svg.dots { margin-left: 605px; }
.hscroll { width: 509px; margin-left: 15px; height: 15px; background: #dadada; display: flex; }
.hscroll .thumb { width: 83px; margin: 0 183px 0 213px; }
.status { height: 22px; flex: none; background: #f1f1f1; border-top: 1px solid #c6c6c6; display: flex; align-items: center; padding-left: 7px; font-size: 11px; letter-spacing: 0; }
.status > span:first-child { width: 51px; }
.views { margin-left: 1002px; display: flex; height: 21px; }
.views span { width: 38px; display: flex; align-items: center; justify-content: center; padding-right: 1px; }
.views + svg { margin-left: 5px; }
.zoomtxt { margin-left: 16px; letter-spacing: -.6px; }

.taskbar { height: 40px; flex: none; background: #282828; display: flex; color: #fff; }
.start { width: 48px; padding: 12px 16px; }
.search { width: 344px; background: #f2f2f2; border: 1px solid #bbb; color: #333; font-size: 15px; display: flex; align-items: center; gap: 11px; padding-left: 11px; letter-spacing: -.55px; }
.apps { margin-left: 1px; display: grid; grid-template-columns: 46px 49px 47px 40px 44px 42px 43px 42px 43px 43px 40px 44px 39px 42px; }
.apps span { display: flex; align-items: center; justify-content: center; }
.apps .run { box-shadow: inset 0 -2px #80dfd2; margin: 0 3px; }
.apps .cur { background: #505050; margin: 0 0 0 1px; }
.tray { display: flex; align-items: center; margin-left: auto; padding-right: 16px; }
.tray .temp { font-size: 13px; width: 44px; margin-left: 10px; letter-spacing: -.3px; }
.tray > :nth-child(3) { margin-left: 3px; }
.tray > :nth-child(4) { margin-left: 12px; }
.tray > :nth-child(5) { margin-left: 10px; }
.tray > :nth-child(6) { margin-left: 6px; }
.tray > :nth-child(7) { margin-left: 7px; }
.tray > :nth-child(8) { margin-left: 9px; }
.clock { width: 58px; margin: 0 16px 0 8px; text-align: center; line-height: 18px; letter-spacing: -.4px; }
.tray text { fill: #fff; }
```
